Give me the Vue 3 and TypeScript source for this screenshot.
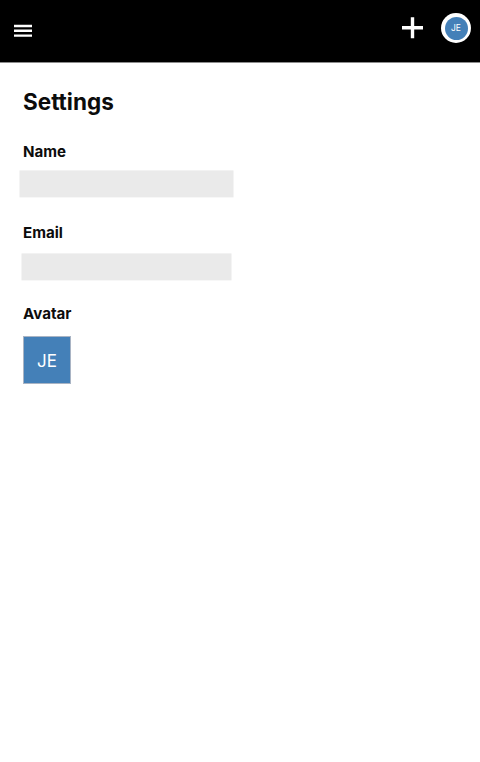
<script setup lang="ts">
interface Field {
  label: string
  kind: string
}
const initials = 'JE'
const fields: Field[] = [
  { label: 'Name', kind: 'name' },
  { label: 'Email', kind: 'email' },
]
</script>

<template>
  <div class="page">
    <header class="bar">
      <svg class="menu" width="18" height="14" viewBox="0 0 18 14">
        <path d="M0 2h18M0 6.8h18M0 11.6h18" stroke="#fff" stroke-width="2.4" />
      </svg>
      <div class="actions">
        <svg class="plus" width="22" height="22" viewBox="0 0 22 22">
          <path d="M10.5 .3v21M0 10.8h21" stroke="#fff" stroke-width="3.4" />
        </svg>
        <div class="account"><span>{{ initials }}</span></div>
      </div>
    </header>
    <main class="content">
      <h1>Settings</h1>
      <section v-for="f in fields" :key="f.kind" class="field">
        <h2>{{ f.label }}</h2>
        <svg class="value" :class="f.kind" width="215" height="28">
          <rect x=".5" y=".4" :width="f.kind === 'name' ? 214 : 210" height="27" fill="#eaeaea" />
        </svg>
      </section>
      <section class="field">
        <h2>Avatar</h2>
        <div class="avatar">{{ initials }}</div>
      </section>
    </main>
  </div>
</template>

<style>
body {
  background: #fff;
}
</style>

<style scoped>
.page {
  height: 762px;
  background: #fff;
  color: #0c0c0c;
  font-family: Inter, "Liberation Sans", sans-serif;
}
.bar {
  box-sizing: border-box;
  height: 63px;
  padding: 0 9px 0 14px;
  background: #000;
  border-bottom: 1px solid #8c8c8c;
  display: flex;
  justify-content: space-between;
}
.menu {
  margin-top: 24px;
}
.actions {
  display: flex;
}
.plus {
  margin: 17px 17px 0 0;
}
.account {
  box-sizing: border-box;
  width: 30px;
  height: 30px;
  margin-top: 13px;
  padding: 3.5px;
  border-radius: 50%;
  background: #fff;
}
.account span {
  display: block;
  width: 23px;
  height: 23px;
  border-radius: 50%;
  background: #4480b8;
  color: #fff;
  font-size: 8.5px;
  font-weight: 400;
  line-height: 23px;
  text-align: center;
}
.content {
  padding: 24px 23px 0;
}
h1 {
  margin: 0 0 25px;
  font-size: 22.5px;
  line-height: 30px;
  font-weight: 700;
}
h2 {
  margin: 0;
  font-size: 15.1px;
  line-height: 20px;
  font-weight: 700;
}
.field {
  height: 81px;
}
.value {
  display: block;
}
.name {
  margin: 8px 0 0 -4px;
}
.email {
  margin: 10px 0 0 -2px;
}
.avatar {
  box-sizing: border-box;
  width: 48px;
  height: 48px;
  margin-top: 12px;
  border: 1px solid #a9b4c4;
  background: #4480b8;
  color: #fff;
  font-size: 17px;
  font-weight: 400;
  line-height: 48px;
  text-align: center;
}
</style>
